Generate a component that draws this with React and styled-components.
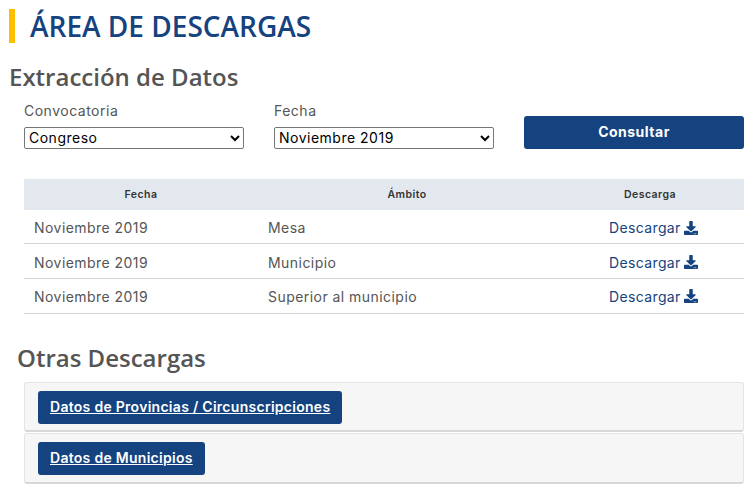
import React from "react";
import styled, { createGlobalStyle } from "styled-components";
import { FaDownload } from "react-icons/fa";

const Global = createGlobalStyle`
  html, body { margin: 0; padding: 0; background: #fff; }
  body { font-family: Inter, "Liberation Sans", sans-serif; }
`;
const Page = styled.div`
  width: 756px; height: 492px; overflow: hidden; box-sizing: border-box;
  padding: 9px 12px 0 9px;
`;
const Title = styled.h1`
  margin: 0; height: 34px; border-left: 6px solid #fdbe00; padding-left: 15px;
  font: 600 28px/34px "Open Sans", sans-serif; color: #15437f;
`;
const Section = styled.h2`
  margin: ${p => p.$top}px 0 0 ${p => p.$left}px;
  font: 600 24px/32px "Open Sans", sans-serif; color: #555;
`;
const Body = styled.div`
  margin: ${p => p.$top || 0}px 0 0 15px; width: 720px;
`;
const Filters = styled.div`
  display: grid; grid-template-columns: 220px 220px 220px; column-gap: 30px;
  align-items: end; margin-top: 9px; height: 45px;
`;
const Label = styled.label`
  display: block; font-size: 14px; line-height: 18px; color: #555; letter-spacing: 0.5px; margin-bottom: 7px;
`;
const Select = styled.select`
  display: block; width: 220px; height: 22px; box-sizing: border-box; padding: 0 0 2px;
  font-family: Inter, sans-serif; font-size: 14px; letter-spacing: 0.5px; color: #000; background: #fff;
  border: 1px solid #767676; border-radius: 2px;
`;
const Submit = styled.button`
  height: 33px; border: 0; border-radius: 3px; background: #14437f; color: #fff;
  font: 700 14px/30px Inter, sans-serif; padding: 0 0 1px; letter-spacing: 0.5px;
`;
const Table = styled.table`
  width: 720px; border-collapse: collapse; margin-top: 32px; table-layout: fixed;
`;
const Th = styled.th`
  height: 30px; padding: 0 0 1px; background: #e3e8ef; color: #333; font-size: 10.5px; font-weight: 600;
  text-align: center; letter-spacing: 0.45px;
`;
const Td = styled.td`
  height: ${p => p.$h}px; padding: ${p => p.$pt}px 0 0 10px; border-bottom: 1px solid #d5d5d5;
  box-sizing: border-box; font-size: 14px; color: #555; letter-spacing: 0.45px;
`;
const DownloadLink = styled.span`
  display: flex; align-items: center; gap: 3px; margin-left: 43px; color: #15437f;
  letter-spacing: 0.37px;
  svg { width: 14px; height: 14px; }
`;
const Panel = styled.div`
  box-sizing: border-box; height: ${p => p.$h}px; margin-bottom: 1px; padding: 8px 13px;
  background: #f6f6f6; border: 1px solid #e3e3e3; border-bottom: 2px solid #d8d8d8; border-radius: 3px;
`;
const PanelLink = styled.a`
  display: inline-block; height: 33px; padding: 0 12px; border-radius: 3px; background: #14437f; color: #fff;
  font-size: 14px; font-weight: 600; line-height: 32px; text-decoration: underline; letter-spacing: 0.28px;
`;

const rows = [
  ["Mesa", 33, 3],
  ["Municipio", 35, 3],
  ["Superior al municipio", 35, 1],
];

export default function App() {
  return (
    <Page>
      <Global />
      <Title>ÁREA DE DESCARGAS</Title>
      <Section $top={18} $left={0}>Extracción de Datos</Section>
      <Body>
        <Filters>
          <div>
            <Label>Convocatoria</Label>
            <Select defaultValue="Congreso"><option>Congreso</option></Select>
          </div>
          <div>
            <Label>Fecha</Label>
            <Select defaultValue="Noviembre 2019"><option>Noviembre 2019</option></Select>
          </div>
          <Submit>Consultar</Submit>
        </Filters>
        <Table>
          <colgroup><col width="234" /><col width="298" /><col width="188" /></colgroup>
          <thead>
            <tr><Th>Fecha</Th><Th>Ámbito</Th><Th>Descarga</Th></tr>
          </thead>
          <tbody>
            {rows.map(([name, h, pt]) => (
              <tr key={name}>
                <Td $h={h} $pt={pt}>Noviembre 2019</Td>
                <Td $h={h} $pt={pt}>{name}</Td>
                <Td $h={h} $pt={pt}><DownloadLink>Descargar <FaDownload /></DownloadLink></Td>
              </tr>
            ))}
          </tbody>
        </Table>
      </Body>
      <Section $top={28} $left={8}>Otras Descargas</Section>
      <Body $top={8}>
        <Panel $h={50}><PanelLink>Datos de Provincias / Circunscripciones</PanelLink></Panel>
        <Panel $h={51}><PanelLink>Datos de Municipios</PanelLink></Panel>
      </Body>
    </Page>
  );
}
